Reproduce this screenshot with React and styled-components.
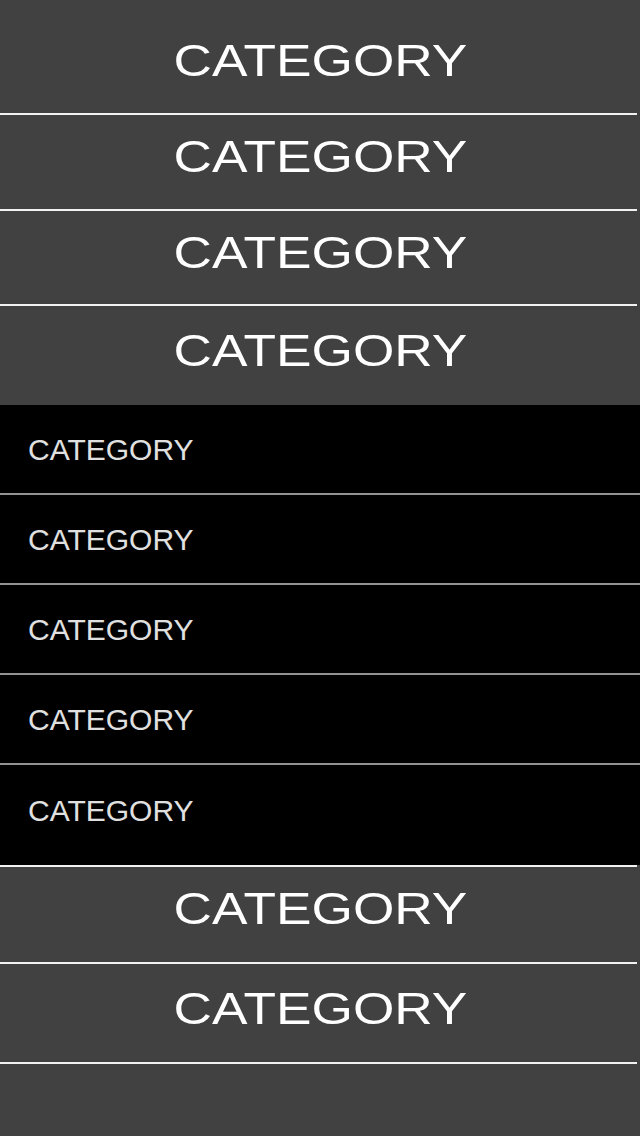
import React from 'react';
import styled, { createGlobalStyle } from 'styled-components';

const GlobalStyle = createGlobalStyle`
  html, body {
    margin: 0;
    padding: 0;
    background: #414141;
  }
  body {
    font-family: "Liberation Sans", Arial, sans-serif;
  }
`;

const Menu = styled.div`
  display: flex;
  flex-direction: column;
  width: 640px;
  min-height: 1136px;
  background: #414141;
`;

const Category = styled.div`
  height: ${(p) => p.$h}px;
  display: flex;
  align-items: center;
  justify-content: center;
`;

// the big labels are drawn a bit wider than the font's own proportions
const CategoryLabel = styled.span`
  display: inline-block;
  font-size: 44px;
  line-height: 1;
  color: #ffffff;
  transform: scaleX(1.21);
  margin-top: ${(p) => (p.$shift > 0 ? p.$shift * 2 : 0)}px;
  margin-bottom: ${(p) => (p.$shift < 0 ? -p.$shift * 2 : 0)}px;
`;

const Separator = styled.div`
  height: 2px;
  margin-right: 3px;
  background: #f2f2f2;
`;

const SubList = styled.div`
  display: flex;
  flex-direction: column;
  background: #000000;
  padding-bottom: 10px;
`;

const SubItem = styled.div`
  height: 90px;
  display: flex;
  align-items: center;
  padding: 2px 0 0 28px;
  box-sizing: border-box;
  font-size: 30px;
  color: #e0e0e0;
  border-bottom: 2px solid #929292;

  &:last-child {
    border-bottom: none;
  }
`;

const topRows = [
  { h: 113, shift: 4.5 },
  { h: 94, shift: -5 },
  { h: 93, shift: -5 },
  { h: 99, shift: -4.5, last: true },
];

const bottomRows = [
  { h: 95, shift: -5.5 },
  { h: 98, shift: -4 },
];

const subItems = ['CATEGORY', 'CATEGORY', 'CATEGORY', 'CATEGORY', 'CATEGORY'];

const App = () => {
  return (
    <>
      <GlobalStyle />
      <Menu>
        {topRows.map((r, i) => (
          <React.Fragment key={`top-${i}`}>
            <Category $h={r.h}>
              <CategoryLabel $shift={r.shift}>CATEGORY</CategoryLabel>
            </Category>
            {!r.last && <Separator />}
          </React.Fragment>
        ))}
        <SubList>
          {subItems.map((s, i) => (
            <SubItem key={i}>{s}</SubItem>
          ))}
        </SubList>
        {bottomRows.map((r, i) => (
          <React.Fragment key={`bottom-${i}`}>
            <Separator />
            <Category $h={r.h}>
              <CategoryLabel $shift={r.shift}>CATEGORY</CategoryLabel>
            </Category>
          </React.Fragment>
        ))}
        <Separator />
      </Menu>
    </>
  );
};

export default App;
